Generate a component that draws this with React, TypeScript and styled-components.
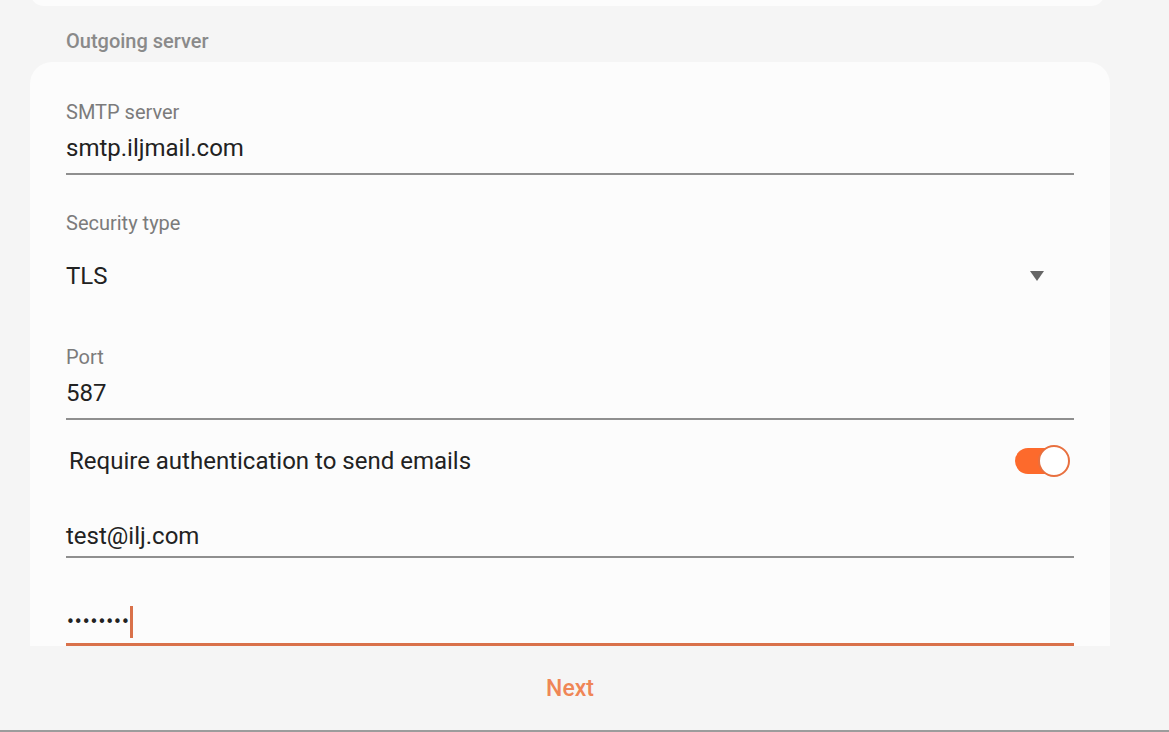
import React from "react";
import styled, { createGlobalStyle } from "styled-components";

const Global = createGlobalStyle`
  html, body { margin: 0; padding: 0; background: #f5f5f5; }
  body { font-family: Roboto, "Noto Sans", "Liberation Sans", sans-serif; -webkit-font-smoothing: antialiased; }
`;

const Page = styled.div`
  width: 1169px;
  height: 732px;
  display: flex;
  flex-direction: column;
  background: #f5f5f5;
  overflow: hidden;
`;

const Scroll = styled.div`
  height: 646px;
  overflow: hidden;
  display: flex;
  flex-direction: column;
  flex-shrink: 0;
`;

const PrevCard = styled.div`
  height: 28px;
  margin: -22px 64px 0 30px;
  background: #fcfcfc;
  border-radius: 22px;
  flex-shrink: 0;
`;

const SectionTitle = styled.div`
  margin: 23px 0 0 66px;
  height: 24px;
  line-height: 24px;
  font-size: 20px;
  font-weight: 500;
  color: #8a8a8a;
`;

const Card = styled.div`
  margin: 9px 59px 0 30px;
  background: #fcfcfc;
  border-radius: 22px 22px 0 0;
  padding: 38px 36px 0 36px;
  display: flex;
  flex-direction: column;
  flex: 1;
`;

const Field = styled.div<{ $gap?: number; $pad?: number; $underline?: "gray" | "accent" | "none" }>`
  display: flex;
  flex-direction: column;
  flex-shrink: 0;
  margin-top: ${(p) => p.$gap ?? 0}px;
  padding-bottom: ${(p) => (p.$underline === "none" ? 0 : p.$pad ?? 10)}px;
  border-bottom: ${(p) =>
    p.$underline === "accent"
      ? "3px solid #d9714a"
      : p.$underline === "none"
      ? "0"
      : "2px solid #8f8f8f"};
`;

const Label = styled.div`
  font-size: 20px;
  line-height: 24px;
  color: #7b7b7b;
`;

const Value = styled.div<{ $top?: number }>`
  margin-top: ${(p) => p.$top ?? 9}px;
  font-size: 24px;
  line-height: 30px;
  color: #222;
  display: flex;
  align-items: center;
`;

const SelectRow = styled.div`
  margin-top: 26px;
  display: flex;
  align-items: center;
  justify-content: space-between;
  padding-right: 30px;
  font-size: 24px;
  line-height: 30px;
  color: #222;
`;

const Caret = styled.span`
  width: 0;
  height: 0;
  border-left: 7px solid transparent;
  border-right: 7px solid transparent;
  border-top: 10px solid #666;
`;

const ToggleRow = styled.div`
  margin-top: 21px;
  height: 40px;
  flex-shrink: 0;
  display: flex;
  align-items: center;
  justify-content: space-between;
  padding-left: 3px;
  padding-right: 4px;
  font-size: 24px;
  color: #222;
`;

const Switch = styled.div`
  position: relative;
  width: 55px;
  height: 32px;
`;

const Track = styled.div`
  position: absolute;
  left: 0;
  top: 3px;
  width: 48px;
  height: 26px;
  border-radius: 13px;
  background: #fd6a2c;
`;

const Thumb = styled.div`
  position: absolute;
  right: 0;
  top: 0;
  width: 28px;
  height: 28px;
  border-radius: 50%;
  background: #fff;
  border: 2px solid #e8703f;
`;

const Dots = styled.span`
  font-size: 15px;
  letter-spacing: -1px;
  color: #222;
  font-family: "DejaVu Sans", sans-serif;
`;

const Cursor = styled.span`
  display: inline-block;
  width: 3px;
  height: 32px;
  margin-left: 1px;
  background: #d9714a;
`;

const Footer = styled.div`
  flex: 1;
  display: flex;
  align-items: center;
  justify-content: center;
  padding: 0 59px 0 30px;
  border-bottom: 2px solid #9c9c9c;
`;

const NextButton = styled.button`
  background: none;
  border: 0;
  padding: 0;
  font-family: Roboto, sans-serif;
  font-size: 23px;
  font-weight: 500;
  color: #ef8656;
  cursor: pointer;
`;

export default function App() {
  return (
    <Page>
      <Global />
      <Scroll>
        <PrevCard />
        <SectionTitle>Outgoing server</SectionTitle>
        <Card>
          <Field>
            <Label>SMTP server</Label>
            <Value>smtp.iljmail.com</Value>
          </Field>
          <Field $gap={36} $underline="none">
            <Label>Security type</Label>
            <SelectRow>
              <span>TLS</span>
              <Caret />
            </SelectRow>
          </Field>
          <Field $gap={54}>
            <Label>Port</Label>
            <Value>587</Value>
          </Field>
          <ToggleRow>
            <span>Require authentication to send emails</span>
            <Switch>
              <Track />
              <Thumb />
            </Switch>
          </ToggleRow>
          <Field $gap={40} $pad={5}>
            <Value $top={0}>test@ilj.com</Value>
          </Field>
          <Field $gap={48} $pad={5} $underline="accent">
            <Value $top={0}>
              <Dots>••••••••</Dots>
              <Cursor />
            </Value>
          </Field>
        </Card>
      </Scroll>
      <Footer>
        <NextButton>Next</NextButton>
      </Footer>
    </Page>
  );
}
